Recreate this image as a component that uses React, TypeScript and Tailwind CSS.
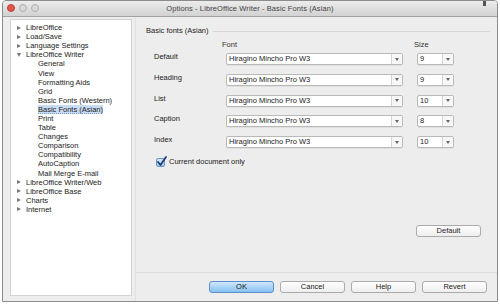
const tree: { label: string; level: 0 | 1; open?: boolean; selected?: boolean }[] = [
  { label: 'LibreOffice', level: 0 },
  { label: 'Load/Save', level: 0 },
  { label: 'Language Settings', level: 0 },
  { label: 'LibreOffice Writer', level: 0, open: true },
  { label: 'General', level: 1 },
  { label: 'View', level: 1 },
  { label: 'Formatting Aids', level: 1 },
  { label: 'Grid', level: 1 },
  { label: 'Basic Fonts (Western)', level: 1 },
  { label: 'Basic Fonts (Asian)', level: 1, selected: true },
  { label: 'Print', level: 1 },
  { label: 'Table', level: 1 },
  { label: 'Changes', level: 1 },
  { label: 'Comparison', level: 1 },
  { label: 'Compatibility', level: 1 },
  { label: 'AutoCaption', level: 1 },
  { label: 'Mail Merge E-mail', level: 1 },
  { label: 'LibreOffice Writer/Web', level: 0 },
  { label: 'LibreOffice Base', level: 0 },
  { label: 'Charts', level: 0 },
  { label: 'Internet', level: 0 },
];

const rows = [
  { label: 'Default', size: '9' },
  { label: 'Heading', size: '9' },
  { label: 'List', size: '10' },
  { label: 'Caption', size: '8' },
  { label: 'Index', size: '10' },
];

function Combo({ value, width }: { value: string; width: string }) {
  return (
    <div className={`${width} h-[12px] flex bg-white border border-[#b9b9b9] rounded-[2px] shadow-[0_1px_0_rgba(0,0,0,0.05)]`}>
      <div className="flex-1 pl-[2px] leading-[10px] text-[7.5px] text-[#222] overflow-hidden whitespace-nowrap">{value}</div>
      <div className="w-[11px] border-l border-[#d4d4d4] bg-[#f7f7f7] flex items-center justify-center">
        <span className="block w-0 h-0 border-l-[2px] border-r-[2px] border-t-[3px] border-l-transparent border-r-transparent border-t-[#666]" />
      </div>
    </div>
  );
}

function Button({ label, primary }: { label: string; primary?: boolean }) {
  return (
    <button
      className={`w-[65px] h-[12px] rounded-[3px] border text-[7.5px] leading-[10px] ${
        primary
          ? 'border-[#5b8fc9] bg-gradient-to-b from-[#cfe6fb] to-[#86c1f2] text-[#111]'
          : 'border-[#ababab] bg-gradient-to-b from-white to-[#eeeeee] text-[#222]'
      }`}
    >
      {label}
    </button>
  );
}

export default function App() {
  return (
    <div className="w-[500px] h-[304px] bg-white font-['Liberation_Sans',Arial,sans-serif] text-[#222]">
      <div className="ml-[2px] w-[496px] h-[302px] flex flex-col border border-[#8c8c8c] rounded-t-[4px] overflow-hidden">
        {/* title bar */}
        <div className="relative h-[16px] flex items-center justify-center bg-gradient-to-b from-[#ececec] to-[#d2d2d2] border-b border-[#a3a3a3]">
          <div className="absolute left-[4px] top-[3px] flex gap-[4px]">
            <span className="w-[8px] h-[8px] rounded-full bg-[#e4544c] border border-[#b7423b]" />
            <span className="w-[8px] h-[8px] rounded-full bg-[#d8d8d8] border border-[#adadad]" />
            <span className="w-[8px] h-[8px] rounded-full bg-[#d8d8d8] border border-[#adadad]" />
          </div>
          <span className="text-[7.5px] text-[#444] tracking-[0.1px]">Options - LibreOffice Writer - Basic Fonts (Asian)</span>
          <span className="absolute right-[11px] top-0 w-[3px] h-[5px] bg-[#555]" />
        </div>

        <div className="flex-1 flex bg-[#ededed]">
          {/* tree */}
          <div className="ml-[7px] mt-[2px] mb-[5px] w-[122px] bg-white border border-[#d2d2d2] pt-[3px]">
            {tree.map((t) => (
              <div
                key={t.label}
                className={`h-[9.1px] flex items-center text-[7.5px] leading-[9px] whitespace-nowrap ${t.level === 1 ? 'pl-[27px]' : 'pl-[6px]'}`}
              >
                {t.level === 0 && (
                  <span className="w-[9px] flex items-center">
                    {t.open ? (
                      <span className="block w-0 h-0 border-l-[2.5px] border-r-[2.5px] border-t-[4px] border-l-transparent border-r-transparent border-t-[#777]" />
                    ) : (
                      <span className="block w-0 h-0 border-t-[2.5px] border-b-[2.5px] border-l-[4px] border-t-transparent border-b-transparent border-l-[#777]" />
                    )}
                  </span>
                )}
                <span className={t.selected ? 'bg-[#c8dcf3] underline decoration-dotted decoration-[#7a9cc6]' : ''}>{t.label}</span>
              </div>
            ))}
          </div>

          {/* right column */}
          <div className="flex-1 flex flex-col ml-[3px] border-l border-[#e0e0e0]">
            <div className="flex-1 flex flex-col pl-[10px] pr-[7px]">
              <div className="mt-[9px] flex items-center gap-[4px]">
                <span className="text-[7.5px] leading-[10px] text-[#222]">Basic fonts (Asian)</span>
                <div className="flex-1 h-px bg-[#d6d6d6]" />
              </div>
              <div className="mt-[4px] flex text-[7.5px] leading-[10px] text-[#333]">
                <span className="ml-[76px] w-[192px]">Font</span>
                <span>Size</span>
              </div>
              <div className="mt-[3px] flex flex-col gap-[8.8px] pl-[8px]">
                {rows.map((r) => (
                  <div key={r.label} className="flex items-center">
                    <span className="w-[72px] text-[7.5px] leading-[10px] -mt-[4px]">{r.label}</span>
                    <Combo value="Hiragino Mincho Pro W3" width="w-[177px]" />
                    <div className="w-[14px]" />
                    <Combo value={r.size} width="w-[37px]" />
                  </div>
                ))}
              </div>
              <div className="mt-[9px] ml-[10px] flex items-center gap-[4px]">
                <span className="relative w-[9px] h-[9px] rounded-[2px] border border-[#6f93c5] bg-gradient-to-b from-[#d7e9fb] to-[#9fc8f0]">
                  <svg className="absolute -left-[1px] -top-[3px] overflow-visible" width="11" height="11" viewBox="0 0 11 11">
                    <path d="M2 6 L4.5 9 L10 1" fill="none" stroke="#1f3f78" strokeWidth="1.8" strokeLinecap="round" strokeLinejoin="round" />
                  </svg>
                </span>
                <span className="text-[7.5px] leading-[10px]">Current document only</span>
              </div>
              <div className="mt-[58px] flex justify-end pr-[9px]">
                <Button label="Default" />
              </div>
            </div>
            <div className="h-px bg-[#dcdcdc] mx-0" />
            <div className="h-[28px] flex items-start pt-[8px] pl-[73px] gap-[6px]">
              <Button label="OK" primary />
              <Button label="Cancel" />
              <Button label="Help" />
              <Button label="Revert" />
            </div>
          </div>
        </div>
      </div>
    </div>
  );
}
